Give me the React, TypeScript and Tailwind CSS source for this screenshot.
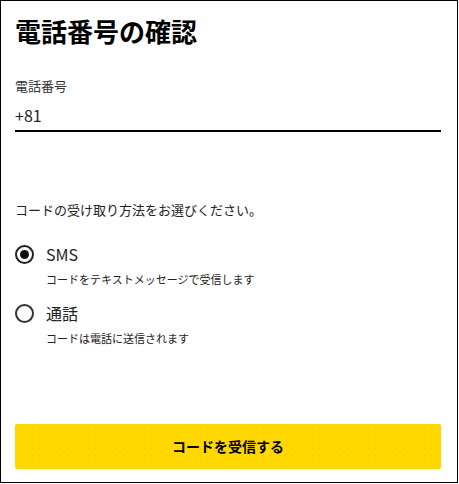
export default function App() {
  const font = "font-['Noto_Sans_CJK_JP','Noto_Sans',sans-serif]";

  return (
    <div className={`w-[459px] h-[484px] bg-white ${font}`}>
      <div className="w-[458px] h-[483px] border border-black flex flex-col px-[14px] text-[#111]">
        <h1 className="mt-[12px] text-[26px] leading-[36px] font-bold text-black">
          電話番号の確認
        </h1>

        <label className="mt-[28px] text-[13px] leading-[17px] text-[#333]">
          電話番号
        </label>
        <div className="mt-[10px] w-[426px] border-b-2 border-black pb-[4px] text-[16px] leading-[22px] text-[#222]">
          +81
        </div>

        <p className="mt-[69px] text-[13px] leading-[18px] text-[#222]">
          コードの受け取り方法をお選びください。
        </p>

        <div className="mt-[24px] flex flex-col gap-[15px]">
          <div className="flex gap-[12px]">
            <span className="mt-[2px] w-[19px] h-[19px] rounded-full border-2 border-[#222] flex items-center justify-center">
              <span className="w-[9px] h-[9px] rounded-full bg-[#111]" />
            </span>
            <div className="flex flex-col">
              <span className="text-[16px] leading-[22px] text-[#222]">SMS</span>
              <span className="mt-[6px] text-[11px] leading-[16px] text-[#222]">
                コードをテキストメッセージで受信します
              </span>
            </div>
          </div>
          <div className="flex gap-[12px]">
            <span className="mt-[2px] w-[19px] h-[19px] rounded-full border-2 border-[#333]" />
            <div className="flex flex-col">
              <span className="text-[16px] leading-[22px] text-[#222]">通話</span>
              <span className="mt-[6px] text-[11px] leading-[16px] text-[#222]">
                コードは電話に送信されます
              </span>
            </div>
          </div>
        </div>

        <button
          type="button"
          className="mt-auto mb-[13px] w-[426px] h-[45px] rounded-[2px] bg-[#ffd800] bg-[radial-gradient(#f7c400_0.6px,transparent_0.8px)] bg-[length:7px_7px] text-[14px] font-bold text-black"
        >
          コードを受信する
        </button>
      </div>
    </div>
  );
}
